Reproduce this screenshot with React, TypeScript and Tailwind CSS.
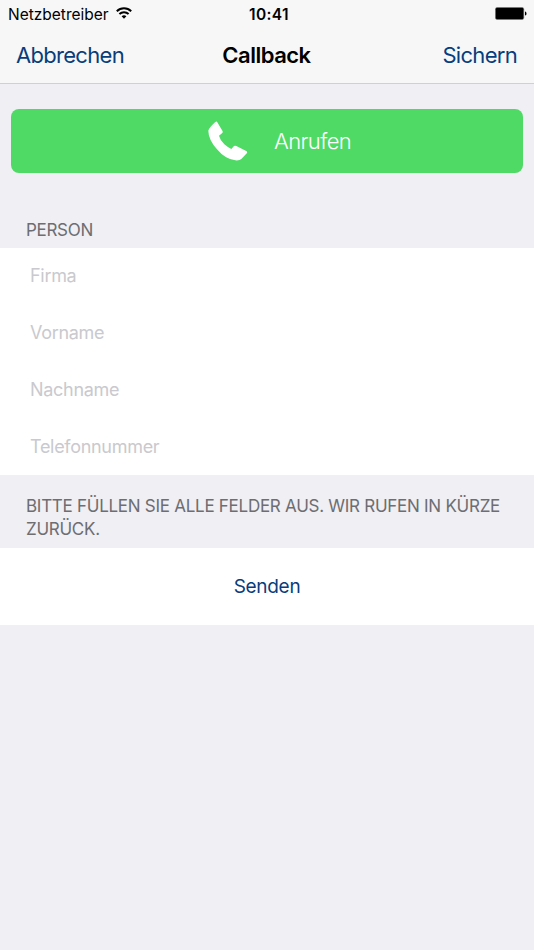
interface FieldRowProps {
  label: string;
}

const fields = ['Firma', 'Vorname', 'Nachname', 'Telefonnummer'];

function WifiIcon() {
  return (
    <svg className="mb-0.5" width="16" height="12" viewBox="0 0 16 12" fill="none" stroke="#000" strokeWidth="2">
      <path d="M0.8 4.2a10.3 10.3 0 0 1 14.4 0" />
      <path d="M3.4 7a6.6 6.6 0 0 1 9.2 0" />
      <path d="M8 11.8 5.6 9.3a3.5 3.5 0 0 1 4.8 0z" fill="#000" stroke="none" />
    </svg>
  );
}

function BatteryIcon() {
  return (
    <svg className="mb-[1px]" width="32" height="13" viewBox="0 0 32 13">
      <rect x="0.4" y="0.4" width="28.4" height="12.2" rx="1.8" fill="#000" stroke="#777" strokeWidth="0.6" />
      <path d="M30 4.4c2 .6 2 3.6 0 4.2z" fill="#000" />
    </svg>
  );
}

function PhoneIcon() {
  return (
    <svg width="40" height="40" viewBox="53 63 120 120" fill="#fff">
      <path d="M80 65 97 94Q98 98 95 100L86 107Q90 122 102 133 112 142 123 147L131 138Q134 136 138 138L169 154Q172 156 170 159L153 177Q148 182 135 181 105 178 80 148 54 118 54 92 56 84 74 67 78 63 80 65Z" />
    </svg>
  );
}

function FieldRow({ label }: FieldRowProps) {
  return (
    <label className="flex h-[56.8px] items-center pb-[1px] pl-[30px] text-[18px] tracking-[-0.3px] text-[#c9c9ce]">
      {label}
    </label>
  );
}

export default function App() {
  return (
    <div className="h-[950px] w-[534px] overflow-hidden bg-[#efeff4] font-['Inter',sans-serif]">
      <header className="h-[84px] border-b border-[#d0d0d4] bg-[#f7f7f7]">
        {/* Status bar */}
        <div className="grid h-7 grid-cols-3 items-center pl-2 pr-[7px]">
          <div className="flex items-center gap-[7px] text-[15.5px] text-black">
            <span className="pt-[1px]">Netzbetreiber</span>
            <WifiIcon />
          </div>
          <span className="pl-[3px] pt-[1px] text-center text-[15.5px] font-semibold tracking-[0.4px] text-black">10:41</span>
          <div className="flex justify-end">
            <BatteryIcon />
          </div>
        </div>

        {/* Navigation bar */}
        <div className="grid h-[54px] grid-cols-3 items-center pl-4 pr-[17px] text-[22px]">
          <button className="text-left tracking-[-0.7px] text-[#083d7c]">Abbrechen</button>
          <h1 className="text-center font-semibold tracking-[-0.5px] text-black">Callback</h1>
          <button className="text-right tracking-[-0.7px] text-[#083d7c]">Sichern</button>
        </div>
      </header>

      <main>
        <button className="mx-[11px] mt-[25px] flex h-16 w-[512px] items-center rounded-lg bg-[#4fda66] pl-[197px] text-[22px] text-white">
          <PhoneIcon />
          <span className="ml-[26px] font-light tracking-[-0.6px]">Anrufen</span>
        </button>

        <h2 className="mt-[46px] h-[29px] pl-[26px] text-[17px] leading-[22px] tracking-[-0.3px] text-[#6d6d72]">PERSON</h2>
        <div className="h-[227px] bg-white">
          {fields.map((label) => (
            <FieldRow key={label} label={label} />
          ))}
        </div>

        <p className="h-[73px] pl-[26px] pt-5 text-[17px] leading-[23px] tracking-[-0.27px] text-[#6d6d72]">
          BITTE FÜLLEN SIE ALLE FELDER AUS. WIR RUFEN IN KÜRZE
          <br />
          ZURÜCK.
        </p>
        <button className="flex h-[77px] w-full items-center justify-center bg-white pt-[2px] text-[19px] tracking-[-0.3px] text-[#083d7c]">
          Senden
        </button>
      </main>
    </div>
  );
}
